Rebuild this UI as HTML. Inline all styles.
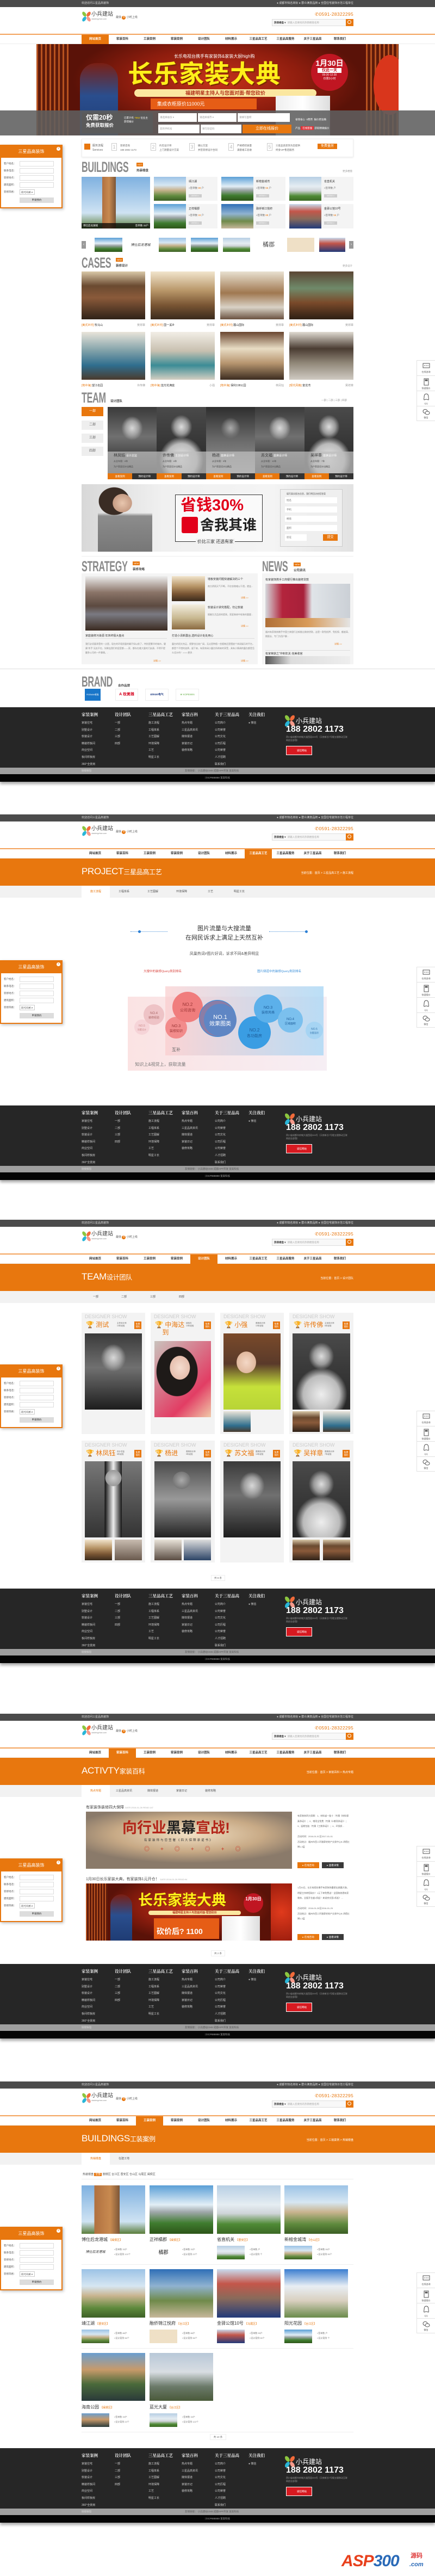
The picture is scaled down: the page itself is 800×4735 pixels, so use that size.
<!DOCTYPE html>
<html><head><meta charset="utf-8">
<style>
*{box-sizing:border-box}
body{margin:0;width:800px;height:4735px;position:relative;background:#fff;font-family:"Liberation Sans","Noto Sans CJK SC",sans-serif;overflow:hidden;color:#333}
.a{position:absolute}
.hd{position:absolute;left:0;width:800px;height:81px}
.tb{position:absolute;left:0;top:0;width:800px;height:13px;background:#4b4b4b;color:#ddd;font-size:5px;line-height:13px}
.tb .l{position:absolute;left:150px}.tb .r{position:absolute;right:150px}
.lg{position:absolute;left:150px;top:21px}
.lgt{position:absolute;left:168px;top:21px;font-size:10px;color:#444;line-height:11px}
.lgu{position:absolute;left:168px;top:33px;font-size:3.5px;color:#888}
.lgs{position:absolute;left:213px;top:28px;font-size:5px;color:#555}
.lgs b{display:inline-block;width:7px;height:7px;border-radius:50%;background:#e8770e;color:#fff;text-align:center;line-height:7px;font-size:5px;font-weight:normal}
.ph{position:absolute;right:150px;top:21px;font-size:8.5px;color:#e8770e;letter-spacing:.3px}
.sr{position:absolute;left:500px;top:35px;width:150px;height:13px;border:1px solid #ddd;background:#f8f8f8;font-size:4.5px;line-height:11px;color:#aaa}
.sr b{color:#333;margin:0 3px}.sr i{position:absolute;right:-1px;top:-1px;width:14px;height:13px;background:#e8770e}
.sr i:after{content:"";position:absolute;left:3px;top:2px;width:5px;height:5px;border:1.3px solid #fff;border-radius:50%}
.ln{position:absolute;left:0;top:62px;width:800px;height:2px;background:#f3a25b}
.nv{position:absolute;left:0;top:64px;width:800px;height:17px;background:#fff;border-bottom:1px solid #eee}
.nv span{position:absolute;top:0;width:50px;height:17px;text-align:center;font-size:5.5px;line-height:17px;font-weight:bold;color:#333}
.nv span.on{background:#e8770e;color:#fff}
.ib{position:absolute;left:0;top:81px;width:800px;height:50px;background:#e8770e;color:#fff}
.ib .t{position:absolute;left:150px;top:14px;font-size:17px;line-height:20px;letter-spacing:-.3px}
.ib .t small{font-size:12px}
.ib .bc{position:absolute;right:150px;top:23px;font-size:5px}
.sn{position:absolute;left:0;top:131px;width:800px;height:22px;background:#f2f2f2}
.sn span{position:absolute;top:0;width:52px;height:22px;text-align:center;font-size:5px;line-height:22px;color:#555}
.sn span.on{background:#fff;color:#e8770e}
.ft{position:absolute;left:0;width:800px;height:137px;box-shadow:0 4px 5px rgba(0,0,0,.35)}
.fd{position:absolute;left:0;top:0;width:800px;height:111px;background:#262626}
.fc{position:absolute;top:8px;font-size:5px;color:#ccc;line-height:12.6px}
.fc b{display:block;font-size:7.5px;color:#eee;font-family:"Liberation Serif","Noto Serif CJK SC",serif;margin-bottom:3px;line-height:12px}
.fg{position:absolute;left:0;top:111px;width:800px;height:12px;background:#9f9f9f;font-size:4.5px;line-height:12px;color:#555}
.fb{position:absolute;left:0;top:123px;width:800px;height:14px;background:#050505;font-size:4.5px;line-height:14px;color:#aaa;text-align:center}
.fl{position:absolute;left:0;width:115px;height:117px;border:2px solid #e8770e;background:#fff;box-shadow:2px 2px 5px rgba(0,0,0,.25)}
.fl .h{position:absolute;left:0;top:0;width:111px;height:22px;background:#e8770e;color:#fff;font-size:8px;line-height:22px;text-align:center}
.fl .x{position:absolute;right:2px;top:2px;width:7px;height:7px;border-radius:50%;background:#fff;color:#e8770e;font-size:5px;line-height:7px;text-align:center}
.fl .r{position:absolute;left:5px;font-size:4.5px;color:#555;line-height:10px;width:105px}
.fl .r i{position:absolute;left:29px;top:0;width:63px;height:10px;border:1px solid #ddd}
.fl .bt{position:absolute;left:34px;top:95px;width:63px;height:10px;background:#ddd;font-size:4.5px;line-height:10px;text-align:center;color:#333}
.tk{position:absolute;left:766px;width:34px;height:112px;background:#fff;border:1px solid #e2e2e2;border-right:none}
.tk div{height:28px;border-bottom:1px solid #e2e2e2;text-align:center;font-size:4px;color:#555;padding-top:4px;line-height:5px}
.tk svg{display:block;margin:0 auto 2px}
.ttl{position:absolute;font-size:27px;font-weight:bold;color:#8a8a8a;transform:scaleX(.6);transform-origin:0 0;line-height:22px;letter-spacing:-.5px}
.tag{position:absolute;background:#e8770e;color:#fff;font-size:4px;line-height:7px;padding:0 2px}
.sub{position:absolute;font-size:5.5px;color:#444;font-weight:bold}
.more{position:absolute;font-size:4.5px;color:#999}
.bld{background:linear-gradient(180deg,#9cc3e6 0%,#d6e6f2 35%,#c9b48f 55%,#5f8a3d 80%,#3c5f25 100%)}
.bld2{background:linear-gradient(180deg,#5a9fd6 0%,#e2eef6 40%,#9fa7a9 55%,#3f7c2f 78%,#2d5519 100%)}
.bld3{background:linear-gradient(180deg,#b7cfe4 0%,#e5edf2 40%,#cfd4d8 58%,#4f8a35 80%,#3c6a26 100%)}
.int{background:linear-gradient(180deg,#d9c8a8 0%,#6a4a30 30%,#8a5a3a 55%,#2f2218 100%)}
.int2{background:linear-gradient(180deg,#f1e4cc 0%,#b89668 40%,#7a5634 70%,#3a2a1c 100%)}
.int3{background:linear-gradient(180deg,#e9e4da 0%,#7fa0a8 40%,#2f6e8e 70%,#4b3a2c 100%)}
.bw{background:radial-gradient(ellipse 22% 18% at 50% 32%,#d8d8d8 0%,#a0a0a0 60%,transparent 100%),linear-gradient(180deg,#3a3a3a 0%,#707070 45%,#1d1d1d 100%)}
.bwl{background:radial-gradient(ellipse 22% 18% at 50% 30%,#ddd 0%,#999 60%,transparent 100%),radial-gradient(ellipse 45% 35% at 50% 80%,#eee 0%,#bbb 70%,transparent 100%),linear-gradient(180deg,#4a4a4a,#262626)}
.s5{font-size:5px;line-height:8px;color:#666}
.cap{position:absolute;font-size:5px;color:#333}
.cap em{color:#e8770e;font-style:normal}
.cap span{position:absolute;right:0;color:#999}
</style></head><body>

<!-- ================= PAGE 1 ================= -->
<div class="hd" style="top:0">
 <div class="tb"><span class="l">欢迎访问三星品高装饰</span><span class="r">● 成都市知名商标 ● 群众满意品牌 ● 全国住宅装饰示范工程单位</span></div>
 <svg class="lg" width="18" height="19" viewBox="0 0 18 19"><ellipse cx="5" cy="5" rx="3" ry="5" transform="rotate(-35 5 5)" fill="#8cc63f"/><ellipse cx="13" cy="5" rx="3" ry="5" transform="rotate(35 13 5)" fill="#f26b3a"/><ellipse cx="5" cy="14" rx="3" ry="5" transform="rotate(35 5 14)" fill="#29b6d8"/><ellipse cx="13" cy="14" rx="3" ry="5" transform="rotate(-35 13 14)" fill="#f59a8b"/></svg>
 <div class="lgt">小兵建站</div><div class="lgu">xiaobingzhan.com</div>
 <div class="lgs">最快 <b>8</b> 小时上线</div>
 <div class="ph">✆0591-28322295</div>
 <div class="sr"><b>热销楼盘 ▾</b>请输入您要找的热销楼盘名称<i></i></div>
 <div class="ln"></div>
 <div class="nv"><span class="on" style="left:150px">网站首页</span><span style="left:200px">家装百科</span><span style="left:250px">工装案例</span><span style="left:300px">家装案例</span><span style="left:350px">设计团队</span><span style="left:400px">材料展示</span><span style="left:450px">三星品高工艺</span><span style="left:500px">三星品高服务</span><span style="left:550px">关于三星品高</span><span style="left:600px">联系我们</span></div>
</div>

<!-- banner -->
<div class="a" style="left:67px;top:81px;width:666px;height:168px;background:radial-gradient(ellipse 40% 60% at 50% 40%,#c5321a 0%,#8e1d0e 60%,#5a1208 100%);overflow:hidden">
 <div class="a" style="left:0;top:0;width:60px;height:168px;background:repeating-linear-gradient(90deg,#b8521f 0 3px,#5e1a0a 3px 8px)"></div>
 <div class="a" style="left:606px;top:0;width:60px;height:168px;background:repeating-linear-gradient(90deg,#b8521f 0 3px,#5e1a0a 3px 8px)"></div>
 <div class="a" style="left:620px;top:20px;width:60px;height:110px;border-radius:50%;background:#d9361c"></div>
 <div class="a" style="left:80px;top:35px;width:70px;height:133px;background:linear-gradient(180deg,#7a1f14 0%,#2a4e8e 45%,#1f3c74 100%);border-radius:30px 30px 0 0"></div>
 <div class="a" style="left:253px;top:17px;font-size:8px;color:#fff">长乐电视台携手有家装饰&amp;家装大厨high购</div>
 <div class="a" style="left:168px;top:30px;font-size:46px;font-weight:bold;color:#ffef1a;letter-spacing:1px;line-height:50px;text-shadow:2px 2px 0 #7a2a00">长乐家装大典</div>
 <div class="a" style="left:505px;top:18px;width:68px;height:68px;border-radius:50%;background:#c01622;color:#fff;text-align:center;font-weight:bold;font-size:14px;padding-top:10px;line-height:15px">1月30日<div style="background:#fff;color:#c01622;font-size:7px;line-height:9px;margin:1px 12px">仅此一天</div><div style="font-size:5px;line-height:7px;font-weight:normal">09:30-12:30<br>仅限3小时</div></div>
 <div class="a" style="left:180px;top:83px;width:335px;height:14px;border-radius:7px;background:#fbe7a0;color:#b2321b;font-size:9px;font-weight:bold;text-align:center;line-height:14px">福建明星主持人与您面对面·帮您砍价</div>
 <div class="a" style="left:210px;top:100px;width:195px;height:20px;background:#e65d16;color:#fff;font-size:9px;line-height:20px;padding-left:12px">集成衣柜原价11000元</div>
 <div class="a" style="left:440px;top:95px;width:100px;height:73px;background:linear-gradient(90deg,#eee,#fff,#ddd)"></div>
</div>
<div class="a" style="left:0;top:203px;width:800px;height:46px;background:rgba(95,95,95,.88)"></div>
<div class="a" style="left:151px;top:207px;width:130px;height:38px;background:#5a5a5a"></div>
<div class="a" style="left:158px;top:210px;font-size:12px;color:#fff;font-weight:bold;line-height:13px">仅需20秒<br><span style="font-size:8.5px">免费获取报价</span></div>
<div class="a" style="left:228px;top:213px;font-size:4.5px;color:#fff;line-height:7px">已累计有 <span style="color:#ffd200">7552</span> 位业主<br>获得报价</div>
<div class="a" style="left:291px;top:208px;width:71px;height:16px;background:#fff;font-size:4.5px;color:#999;line-height:16px;padding-left:3px">请选择省份 ▾</div>
<div class="a" style="left:364px;top:208px;width:71px;height:16px;background:#fff;font-size:4.5px;color:#999;line-height:16px;padding-left:3px">请选择城市 ▾</div>
<div class="a" style="left:437px;top:208px;width:96px;height:16px;background:#fff;font-size:4.5px;color:#999;line-height:16px;padding-left:3px">请填写面积</div>
<div class="a" style="left:291px;top:229px;width:76px;height:16px;background:#fff;font-size:4.5px;color:#999;line-height:16px;padding-left:3px">您的手机号</div>
<div class="a" style="left:369px;top:229px;width:75px;height:16px;background:#fff;font-size:4.5px;color:#999;line-height:16px;padding-left:3px">填写验证码</div>
<div class="a" style="left:446px;top:229px;width:90px;height:16px;background:#e8770e;font-size:7px;color:#fff;line-height:16px;text-align:center">立即在线报价</div>
<div class="a" style="left:543px;top:212px;font-size:4.5px;color:#fff;line-height:16px">省钱省心 &nbsp;0费用 &nbsp;报价更准确<br>产品 <span style="background:#e2353a;padding:1px 3px">在线客服</span> 获取精确报价</div>

<!-- services -->
<div class="a" style="left:150px;top:255px;width:500px;height:34px;background:#fff;border:1px solid #eee;box-shadow:0 1px 3px rgba(0,0,0,.08)"></div>
<div class="a" style="left:155px;top:264px;width:11px;height:11px;background:#e8770e"></div>
<div class="a s5" style="left:170px;top:264px">服务流程<br>Services</div>
<div class="a" style="left:205px;top:263px;width:10px;height:14px;border:1px solid #ccc;font-size:9px;color:#bbb;text-align:center;line-height:12px">1</div><div class="a s5" style="left:221px;top:264px;font-size:4.5px">装修咨询<br>188 2802 1173</div>
<div class="a" style="left:277px;top:263px;width:10px;height:14px;border:1px solid #ccc;font-size:9px;color:#bbb;text-align:center;line-height:12px">2</div><div class="a s5" style="left:293px;top:264px;font-size:4.5px">约见设计师<br>上门测量设计方案</div>
<div class="a" style="left:348px;top:263px;width:10px;height:14px;border:1px solid #ccc;font-size:9px;color:#bbb;text-align:center;line-height:12px">3</div><div class="a s5" style="left:364px;top:264px;font-size:4.5px">确认方案<br>并签装修设计合同</div>
<div class="a" style="left:420px;top:263px;width:10px;height:14px;border:1px solid #ccc;font-size:9px;color:#bbb;text-align:center;line-height:12px">4</div><div class="a s5" style="left:436px;top:264px;font-size:4.5px">严格把控质量<br>满意竣工验收</div>
<div class="a" style="left:491px;top:263px;width:10px;height:14px;border:1px solid #ccc;font-size:9px;color:#bbb;text-align:center;line-height:12px">5</div><div class="a s5" style="left:507px;top:264px;font-size:4.5px">三星品高装饰为您提供<br>终身VIP售后服务</div>
<div class="a" style="left:584px;top:264px;width:36px;height:10px;background:#e8770e;color:#fff;font-size:6px;line-height:10px;text-align:center">免费量房</div>

<!-- BUILDINGS -->
<div class="ttl" style="left:150px;top:296px">BUILDINGS</div>
<div class="tag" style="left:251px;top:299px">HOT</div><div class="sub" style="left:251px;top:309px">热装楼盘</div>
<div class="more" style="left:630px;top:312px">更多楼盘</div>
<div class="a bld" style="left:150px;top:325px;width:126px;height:95px;background:linear-gradient(90deg,transparent 30%,#b07040 30%,#c88a50 40%,#7c5637 50%,transparent 50%),linear-gradient(180deg,#7fb1e0,#cfe3f3 70%,#5a7d3a)"></div>
<div class="a" style="left:150px;top:410px;width:126px;height:10px;background:rgba(0,0,0,.7);color:#fff;font-size:4.5px;line-height:10px;padding:0 3px">博仕后龙湖城<span style="float:right">签单数 33户</span></div>

<div class="a" style="left:283px;top:325px;width:117px;height:44px;background:#f4f4f4"><div class="a bld" style="left:0;top:0;width:59px;height:44px"></div><div class="a s5" style="left:64px;top:5px;color:#333">靖江湖</div><div class="a s5" style="left:64px;top:17px;font-size:4.5px">»签单数 <em style="color:#e8770e;font-style:normal">88</em> 户</div><div class="a" style="left:64px;top:32px;width:24px;height:6px;background:#ccc;color:#fff;font-size:4px;line-height:6px;text-align:center">VIEW>></div></div>
<div class="a" style="left:407px;top:325px;width:118px;height:44px;background:#f4f4f4"><div class="a bld2" style="left:0;top:0;width:59px;height:44px"></div><div class="a s5" style="left:64px;top:5px;color:#333">新榕金城湾</div><div class="a s5" style="left:64px;top:17px;font-size:4.5px">»签单数 <em style="color:#e8770e;font-style:normal">55</em> 户</div><div class="a" style="left:64px;top:32px;width:24px;height:6px;background:#ccc;color:#fff;font-size:4px;line-height:6px;text-align:center">VIEW>></div></div>
<div class="a" style="left:532px;top:325px;width:118px;height:44px;background:#f4f4f4"><div class="a bld3" style="left:0;top:0;width:59px;height:44px"></div><div class="a s5" style="left:64px;top:5px;color:#333">省直机关</div><div class="a s5" style="left:64px;top:17px;font-size:4.5px">»签单数 户</div><div class="a" style="left:64px;top:32px;width:24px;height:6px;background:#ccc;color:#fff;font-size:4px;line-height:6px;text-align:center">VIEW>></div></div>
<div class="a" style="left:283px;top:375px;width:117px;height:45px;background:#f4f4f4"><div class="a bld2" style="left:0;top:0;width:59px;height:45px"></div><div class="a s5" style="left:64px;top:5px;color:#333">正祥橘郡</div><div class="a s5" style="left:64px;top:17px;font-size:4.5px">»签单数 <em style="color:#e8770e;font-style:normal">33</em> 户</div><div class="a" style="left:64px;top:32px;width:24px;height:6px;background:#ccc;color:#fff;font-size:4px;line-height:6px;text-align:center">VIEW>></div></div>
<div class="a" style="left:407px;top:375px;width:118px;height:45px;background:#f4f4f4"><div class="a bld" style="left:0;top:0;width:59px;height:45px;background:linear-gradient(180deg,#2f6fb7,#8fb2d0 40%,#6f8a4a 70%,#c7b79b)"></div><div class="a s5" style="left:64px;top:5px;color:#333">融侨锦江悦府</div><div class="a s5" style="left:64px;top:17px;font-size:4.5px">»签单数 <em style="color:#e8770e;font-style:normal">88</em> 户</div><div class="a" style="left:64px;top:32px;width:24px;height:6px;background:#ccc;color:#fff;font-size:4px;line-height:6px;text-align:center">VIEW>></div></div>
<div class="a" style="left:532px;top:375px;width:118px;height:45px;background:#f4f4f4"><div class="a" style="left:0;top:0;width:59px;height:45px;background:linear-gradient(180deg,#c9dcef,#c4564a 30%,#8a6a5a 60%,#223a7a)"></div><div class="a s5" style="left:64px;top:5px;color:#333">金驿公馆10号</div><div class="a s5" style="left:64px;top:17px;font-size:4.5px">»签单数 <em style="color:#e8770e;font-style:normal">55</em> 户</div><div class="a" style="left:64px;top:32px;width:24px;height:6px;background:#ccc;color:#fff;font-size:4px;line-height:6px;text-align:center">VIEW>></div></div>

<!-- logo carousel -->
<div class="a" style="left:150px;top:443px;width:8px;height:14px;background:#999;color:#fff;font-size:7px;line-height:14px;text-align:center">‹</div>
<div class="a" style="left:642px;top:443px;width:8px;height:14px;background:#999;color:#fff;font-size:7px;line-height:14px;text-align:center">›</div>
<div class="a bld2" style="left:174px;top:437px;width:51px;height:26px"></div>
<div class="a" style="left:233px;top:437px;width:51px;height:26px;background:#fff;font-size:6px;color:#333;text-align:center;padding-top:8px;font-style:italic">博仕后龙港城</div>
<div class="a bld" style="left:292px;top:437px;width:50px;height:26px"></div>
<div class="a bld2" style="left:351px;top:437px;width:50px;height:26px"></div>
<div class="a bld3" style="left:410px;top:437px;width:50px;height:26px"></div>
<div class="a" style="left:469px;top:437px;width:50px;height:26px;background:#fff;font-size:11px;color:#222;text-align:center;line-height:24px;font-family:'Noto Serif CJK SC',serif">橘郡</div>
<div class="a" style="left:528px;top:437px;width:50px;height:26px;background:#efe0c6"></div>
<div class="a" style="left:587px;top:437px;width:48px;height:26px;background:linear-gradient(180deg,#c9dcef,#c4564a 40%,#223a7a)"></div>

<!-- CASES -->
<div class="ttl" style="left:150px;top:472px">CASES</div>
<div class="tag" style="left:213px;top:474px">NEW</div><div class="sub" style="left:213px;top:484px">装修设计</div>
<div class="more" style="left:630px;top:486px">更多设计</div>
<div class="a int" style="left:150px;top:499px;width:117px;height:88px"></div>
<div class="a int2" style="left:277px;top:499px;width:118px;height:88px"></div>
<div class="a int2" style="left:405px;top:499px;width:117px;height:88px;background:linear-gradient(180deg,#e8e0d0,#a07850 45%,#d9d2c6 75%,#6a5240)"></div>
<div class="a int" style="left:532px;top:499px;width:118px;height:88px;background:linear-gradient(180deg,#5b4634,#6f8a6a 35%,#7a4a2a 65%,#2d1f14)"></div>
<div class="cap" style="left:150px;top:594px;width:117px"><em>[美式乡村]</em> 牧马山<span>吴祥章</span></div>
<div class="cap" style="left:277px;top:594px;width:118px"><em>[美式乡村]</em> 国一溪乡<span>吴祥章</span></div>
<div class="cap" style="left:405px;top:594px;width:117px"><em>[美式乡村]</em> 麓山国际<span>吴祥章</span></div>
<div class="cap" style="left:532px;top:594px;width:118px"><em>[美式乡村]</em> 麓山国际<span>吴祥章</span></div>
<div class="a int3" style="left:150px;top:610px;width:117px;height:88px"></div>
<div class="a int3" style="left:277px;top:610px;width:118px;height:88px;background:linear-gradient(180deg,#f2eee6,#c8c0b0 40%,#3b8c96 70%,#d5cfc2)"></div>
<div class="a int2" style="left:405px;top:610px;width:117px;height:88px;background:linear-gradient(180deg,#6a4630,#e8dcc4 35%,#b89670 65%,#3c2c20)"></div>
<div class="a" style="left:532px;top:610px;width:118px;height:88px;background:linear-gradient(180deg,#e0dbd2,#4a3c32 35%,#908778 65%,#cfcac2)"></div>
<div class="cap" style="left:150px;top:705px;width:117px"><em>[地中海]</em> 望江名园<span>许传佛</span></div>
<div class="cap" style="left:277px;top:705px;width:118px"><em>[地中海]</em> 蓝光花满庭<span>小强</span></div>
<div class="cap" style="left:405px;top:705px;width:117px"><em>[地中海]</em> 保利198公园<span>林凤钰</span></div>
<div class="cap" style="left:532px;top:705px;width:118px"><em>[现代风格]</em> 富龙湾<span>吴祥章</span></div>

<!-- TEAM -->
<div class="ttl" style="left:150px;top:720px">TEAM</div>
<div class="sub" style="left:203px;top:733px">设计团队</div>
<div class="more" style="left:591px;top:733px">一部 | 二部 | 三部 | 四部</div>
<div class="a" style="left:150px;top:748px;width:40px;height:17px;background:#e8770e;color:#fff;font-size:6px;line-height:17px;text-align:center">一部</div>
<div class="a" style="left:150px;top:773px;width:40px;height:17px;background:#eee;color:#666;font-size:6px;line-height:17px;text-align:center">二部</div>
<div class="a" style="left:150px;top:797px;width:40px;height:17px;background:#eee;color:#666;font-size:6px;line-height:17px;text-align:center">三部</div>
<div class="a" style="left:150px;top:821px;width:40px;height:17px;background:#eee;color:#666;font-size:6px;line-height:17px;text-align:center">四部</div>
<div class="a" style="left:198px;top:748px;width:452px;height:133px;background:#333"></div>
<div class="a bw" style="left:198px;top:748px;width:90px;height:122px"></div>
<div class="a bwl" style="left:288px;top:748px;width:91px;height:122px"></div>
<div class="a bw" style="left:379px;top:748px;width:90px;height:122px;background:radial-gradient(ellipse 20% 16% at 50% 32%,#aaa,#777 60%,transparent),linear-gradient(180deg,#2d2d2d,#6a6a6a 50%,#999)"></div>
<div class="a bw" style="left:469px;top:748px;width:91px;height:122px"></div>
<div class="a bwl" style="left:560px;top:748px;width:90px;height:122px"></div>
<div class="a" style="left:198px;top:830px;width:452px;height:40px;background:rgba(190,190,190,.75)"></div>
<div class="a s5" style="left:209px;top:833px;color:#333;font-size:7px;line-height:10px">林凤钰 <span style="font-size:5px;color:#fff">设计总监</span><br><span style="font-size:4px;color:#444;line-height:6px">从业年限：8年<br>为户家居设计出精品</span></div>
<div class="a s5" style="left:299px;top:833px;color:#333;font-size:7px;line-height:10px">许传佛 <span style="font-size:5px;color:#fff">主创设计师</span><br><span style="font-size:4px;color:#444;line-height:6px">从业年限：6年<br>为户家居设计出精品</span></div>
<div class="a s5" style="left:390px;top:833px;color:#333;font-size:7px;line-height:10px">杨进 <span style="font-size:5px;color:#fff">首席设计师</span><br><span style="font-size:4px;color:#444;line-height:6px">从业年限：9年<br>为户家居设计出精品</span></div>
<div class="a s5" style="left:480px;top:833px;color:#333;font-size:7px;line-height:10px">苏文福 <span style="font-size:5px;color:#fff">首席设计师</span><br><span style="font-size:4px;color:#444;line-height:6px">从业年限：10年<br>为户家居设计出精品</span></div>
<div class="a s5" style="left:571px;top:833px;color:#333;font-size:7px;line-height:10px">吴祥章 <span style="font-size:5px;color:#fff">首席设计师</span><br><span style="font-size:4px;color:#444;line-height:6px">从业年限：7年<br>为户家居设计出精品</span></div>
<div class="a" style="left:198px;top:870px;width:452px;height:11px;font-size:4.5px;line-height:11px;color:#fff;text-align:center;display:flex">
<span style="flex:1;background:#e8770e">查看案例</span><span style="flex:1;background:#333">预约设计师</span><span style="flex:1;background:#e8770e">查看案例</span><span style="flex:1;background:#333">预约设计师</span><span style="flex:1;background:#e8770e">查看案例</span><span style="flex:1;background:#333">预约设计师</span><span style="flex:1;background:#e8770e">查看案例</span><span style="flex:1;background:#333">预约设计师</span><span style="flex:1;background:#e8770e">查看案例</span><span style="flex:1;background:#333">预约设计师</span></div>

<!-- Ad -->
<div class="a" style="left:150px;top:890px;width:500px;height:124px;background:linear-gradient(90deg,#d8d8d8,#f0f0f0 30%,#f4f4f4 70%,#e2e2e2)"></div>
<div class="a" style="left:180px;top:895px;width:100px;height:119px;background:radial-gradient(ellipse 25% 20% at 45% 25%,#e8c6ae,#c69c84 70%,transparent 72%),radial-gradient(ellipse 40% 30% at 30% 22%,#3a2c24,#3a2c24 70%,transparent 72%),linear-gradient(180deg,transparent 40%,#8c8c8c 45%,#777)"></div>
<div class="a" style="left:322px;top:909px;width:161px;height:87px;border:1px solid #333;background:rgba(255,255,255,.6)"></div>
<div class="a" style="left:332px;top:913px;font-size:29px;font-weight:bold;color:#e2001a;line-height:32px">省钱30%</div>
<div class="a" style="left:334px;top:950px;width:30px;height:30px;background:#e2001a;border-radius:3px"></div>
<div class="a" style="left:368px;top:950px;font-size:26px;font-weight:bold;color:#222;line-height:30px">舍我其谁</div>
<div class="a" style="left:360px;top:990px;font-size:8px;color:#333;background:#f2f2f2;padding:0 3px">价比三家 还选有家</div>
<div class="a" style="left:515px;top:899px;width:115px;height:106px;border:1px solid #ccc;background:rgba(240,240,240,.9)"></div>
<div class="a" style="left:527px;top:905px;font-size:4px;color:#555">填写真实报名信息，我们将回访给您答案</div>
<div class="a" style="left:524px;top:914px;width:96px;height:11px;background:#fff;font-size:4.5px;color:#777;line-height:11px;padding-left:3px">姓名</div>
<div class="a" style="left:524px;top:931px;width:96px;height:11px;background:#fff;font-size:4.5px;color:#777;line-height:11px;padding-left:3px">手机</div>
<div class="a" style="left:524px;top:948px;width:96px;height:11px;background:#fff;font-size:4.5px;color:#777;line-height:11px;padding-left:3px">楼盘</div>
<div class="a" style="left:524px;top:965px;width:96px;height:11px;background:#fff;font-size:4.5px;color:#777;line-height:11px;padding-left:3px">面积</div>
<div class="a" style="left:524px;top:982px;width:40px;height:12px;background:#fff;font-size:4.5px;color:#777;line-height:12px;padding-left:3px">验证</div>
<div class="a" style="left:594px;top:982px;width:27px;height:12px;background:#e8770e;font-size:6px;color:#fff;line-height:12px;text-align:center">提交</div>
<div class="a" style="left:150px;top:1022px;width:500px;height:1px;background:#eee"></div>

<!-- STRATEGY / NEWS -->
<div class="ttl" style="left:150px;top:1030px">STRATEGY</div>
<div class="tag" style="left:244px;top:1032px">NEW</div><div class="sub" style="left:244px;top:1042px">装修攻略</div>
<div class="ttl" style="left:482px;top:1030px">NEWS</div>
<div class="tag" style="left:540px;top:1034px">NEW</div><div class="sub" style="left:540px;top:1044px">公司资讯</div>
<div class="a" style="left:150px;top:1054px;width:324px;height:167px;background:#f4f4f4"></div>
<div class="a" style="left:157px;top:1059px;width:151px;height:100px;background:linear-gradient(180deg,#ececec 0%,#8a7468 30%,#5c4a40 55%,#7a7a82 70%,#3b2a20 100%)"></div>
<div class="a int2" style="left:316px;top:1059px;width:61px;height:46px"></div>
<div class="a int2" style="left:316px;top:1111px;width:61px;height:46px;background:linear-gradient(180deg,#f3eee0,#c8b890 55%,#8a6a40)"></div>
<div class="a s5" style="left:382px;top:1061px;color:#333;font-size:5px">墙板安装问题快速解决的三个</div>
<div class="a" style="left:382px;top:1074px;width:88px;font-size:4px;color:#888;line-height:7px">南方阴雨天气不断，不仅衣物难以干透，就连...</div>
<div class="a" style="left:443px;top:1096px;font-size:4px;color:#e8770e">详情 &gt;&gt;</div>
<div class="a s5" style="left:382px;top:1113px;color:#333;font-size:5px">软装设计讲究搭配，勿让软装</div>
<div class="a" style="left:382px;top:1126px;width:88px;font-size:4px;color:#888;line-height:7px">随着生活品质的提高，家庭装修中软装的重要...</div>
<div class="a" style="left:443px;top:1148px;font-size:4px;color:#e8770e">详情 &gt;&gt;</div>
<div class="a s5" style="left:157px;top:1165px;color:#333;font-size:5px;width:150px;border-bottom:1px solid #ddd">家庭装修污染源 年末终极大盘点</div>
<div class="a" style="left:157px;top:1180px;width:150px;font-size:4px;color:#888;line-height:8px">我们必须要承受的一点是，现在的环境质量的确不如以前了，特别是繁华的城市，健康"杀手"无处不在，如果连我们的居室都——家，都存在着大量的污染源，不得不提醒多公司的一件事情。..</div>
<div class="a" style="left:282px;top:1212px;font-size:4px;color:#e8770e">详情 &gt;&gt;</div>
<div class="a s5" style="left:316px;top:1165px;color:#333;font-size:5px;width:152px;border-bottom:1px solid #ddd">打造小清新露台,选料设计处处用心</div>
<div class="a" style="left:316px;top:1180px;width:152px;font-size:4px;color:#888;line-height:8px">露台的阳光充足，视野也比较广阔，无论是种植一些植物还是摆放个休闲娱乐的平台，都是个不错的选择，留下来，有家休闲小露台所带来的享受，具有小情调的露台都是怎么设计的！&gt;&gt;&gt;&gt;更多..</div>
<div class="a" style="left:443px;top:1212px;font-size:4px;color:#e8770e">详情 &gt;&gt;</div>
<div class="a" style="left:482px;top:1054px;width:168px;height:167px;background:#f4f4f4"></div>
<div class="a s5" style="left:488px;top:1062px;color:#333;font-size:5px">有家装饰携手工商银行推出装修贷款</div>
<div class="a" style="left:488px;top:1073px;width:156px;height:80px;background:linear-gradient(90deg,#d4d8dc,#b3243c 20%,#a8203a 45%,#e0e4e8 55%,#cbd0d6),linear-gradient(#ccc,#c48a4a)"></div>
<div class="a" style="left:488px;top:1136px;width:156px;height:17px;background:linear-gradient(90deg,#b07038,#d89a58,#e4e4e4)"></div>
<div class="a" style="left:488px;top:1158px;width:156px;font-size:4px;color:#888;line-height:8px">福州有家装饰携手中国工商银行全新推出装修贷款，这是一款免抵押、免担保、额度高、期限长、专门为用户解...</div>
<div class="a" style="left:615px;top:1181px;font-size:4px;color:#e8770e">详情 &gt;&gt;</div>
<div class="a s5" style="left:488px;top:1195px;color:#333;font-size:5px;width:156px;border-top:1px solid #ddd;padding-top:2px">有家荣获之"冲刺年关·完美收官</div>
<div class="a" style="left:488px;top:1206px;width:156px;height:15px;background:linear-gradient(90deg,#555,#ddd 30%,#eee)"></div>

<div class="a" style="left:0;top:1229px;width:800px;height:1px;background:#ddd"></div>
<div class="ttl" style="left:150px;top:1242px">BRAND</div>
<div class="sub" style="left:217px;top:1256px">合作品牌</div>
<div class="a" style="left:156px;top:1266px;width:29px;height:22px;background:#1976c9;color:#fff;font-size:4px;text-align:center;line-height:22px">ROBAM老板</div>
<div class="a" style="left:212px;top:1266px;width:42px;height:22px;background:#fff;border:1px solid #eee;color:#d6001c;font-size:7px;text-align:center;line-height:20px;font-weight:bold">A 玫美雅</div>
<div class="a" style="left:267px;top:1266px;width:43px;height:22px;background:#fff;border:1px solid #eee;color:#1d3a80;font-size:5px;text-align:center;line-height:20px;font-weight:bold">simon电气</div>
<div class="a" style="left:323px;top:1266px;width:43px;height:22px;background:#fff;border:1px solid #eee;color:#6ab04c;font-size:4.5px;text-align:center;line-height:20px">❦ KOPEWIN</div>

<!-- FOOTER template p1 -->
<div class="ft" style="top:1300px">
 <div class="fd"></div>
 <div class="fc" style="left:150px"><b>家装案例</b>家装住宅<br>别墅设计<br>软装设计<br>精装样板间<br>商业空间<br>板间样板房<br>360°全景房</div>
 <div class="fc" style="left:211px"><b>设计团队</b>一部<br>二部<br>三部<br>四部</div>
 <div class="fc" style="left:273px"><b>三星品高工艺</b>施工流程<br>工程体系<br>工艺图解<br>环境保障<br>工艺<br>明星工长</div>
 <div class="fc" style="left:334px"><b>家装百科</b>热点专题<br>三星品高资讯<br>媒体报道<br>家装日记<br>装修攻略</div>
 <div class="fc" style="left:395px"><b>关于三星品高</b>公司简介<br>公司荣誉<br>公司文化<br>公司历程<br>公司荣誉<br>人才招聘<br>联系我们</div>
 <div class="fc" style="left:457px"><b>关注我们</b>● 微信</div>
 <svg class="a" style="left:522px;top:14px" width="22" height="22" viewBox="0 0 18 19"><ellipse cx="5" cy="5" rx="3" ry="5" transform="rotate(-35 5 5)" fill="#8cc63f"/><ellipse cx="13" cy="5" rx="3" ry="5" transform="rotate(35 13 5)" fill="#f26b3a"/><ellipse cx="5" cy="14" rx="3" ry="5" transform="rotate(35 5 14)" fill="#29b6d8"/><ellipse cx="13" cy="14" rx="3" ry="5" transform="rotate(-35 13 14)" fill="#f59a8b"/></svg>
 <div class="a" style="left:544px;top:16px;font-size:12px;color:#fff">小兵建站</div>
 <div class="a" style="left:526px;top:32px;font-size:16px;font-weight:bold;color:#fff;line-height:18px">188 2802 1173</div>
 <div class="a" style="left:526px;top:52px;width:115px;font-size:4px;color:#999;line-height:6px">四川省成都市府城大道西段399号（天府新谷7号楼五楼移动互联网创业部落）</div>
 <div class="a" style="left:526px;top:71px;width:48px;height:17px;background:#d71920;border:1px solid #fff;color:#fff;font-size:4.5px;line-height:15px;padding-left:19px">诚信网站</div>
 <div class="fg"><span style="position:absolute;left:150px;color:#ddd">链接按钮</span><span style="position:absolute;left:340px">友情链接： 小兵建站CMS 成都APP开发 宽高科技</span></div>
 <div class="fb">川ICP888888 宽高科技</div>
</div>

<!-- float + toolbar p1 -->
<div class="fl" style="top:266px"><div class="h">三星品高装饰</div><div class="x">x</div>
<div class="r" style="top:28px">客户姓名：<i></i></div><div class="r" style="top:41px">联系电话：<i></i></div><div class="r" style="top:54px">装修地点：<i></i></div><div class="r" style="top:67px">建筑面积：<i></i></div><div class="r" style="top:80px">装修风格：<i style="width:28px;border-color:#ccc">&nbsp;现代风格 ▾</i></div><div class="bt">申请预约</div></div>
<div class="tk" style="top:662px"><div><svg width="14" height="12"><rect x="1" y="1" width="12" height="8" fill="none" stroke="#555"/><circle cx="4" cy="5" r=".8" fill="#555"/><circle cx="7" cy="5" r=".8" fill="#555"/><circle cx="10" cy="5" r=".8" fill="#555"/></svg>在线咨询</div><div><svg width="10" height="14"><rect x="1" y="1" width="8" height="12" fill="none" stroke="#555"/><rect x="2.5" y="2.5" width="5" height="3" fill="#555"/></svg>快速报价</div><div><svg width="12" height="14"><path d="M6 1C3 1 2 4 2 7c0 2-1 4 0 5 1 0 2-1 4-1s3 1 4 1c1-1 0-3 0-5 0-3-1-6-4-6z" fill="none" stroke="#555"/></svg>QQ</div><div style="border:none"><svg width="14" height="12"><ellipse cx="5" cy="5" rx="4" ry="3.5" fill="none" stroke="#555"/><ellipse cx="9" cy="8" rx="4" ry="3" fill="#fff" stroke="#555"/></svg>微信</div></div>

<!-- ================= PAGE 2 ================= -->
<div class="hd" style="top:1497px">
 <div class="tb"><span class="l">欢迎访问三星品高装饰</span><span class="r">● 成都市知名商标 ● 群众满意品牌 ● 全国住宅装饰示范工程单位</span></div>
 <svg class="lg" width="18" height="19" viewBox="0 0 18 19"><ellipse cx="5" cy="5" rx="3" ry="5" transform="rotate(-35 5 5)" fill="#8cc63f"/><ellipse cx="13" cy="5" rx="3" ry="5" transform="rotate(35 13 5)" fill="#f26b3a"/><ellipse cx="5" cy="14" rx="3" ry="5" transform="rotate(35 5 14)" fill="#29b6d8"/><ellipse cx="13" cy="14" rx="3" ry="5" transform="rotate(-35 13 14)" fill="#f59a8b"/></svg>
 <div class="lgt">小兵建站</div><div class="lgu">xiaobingzhan.com</div><div class="lgs">最快 <b>8</b> 小时上线</div>
 <div class="ph">✆0591-28322295</div><div class="sr"><b>热销楼盘 ▾</b>请输入您要找的热销楼盘名称<i></i></div><div class="ln"></div>
 <div class="nv"><span style="left:150px">网站首页</span><span style="left:200px">家装百科</span><span style="left:250px">工装案例</span><span style="left:300px">家装案例</span><span style="left:350px">设计团队</span><span style="left:400px">材料展示</span><span class="on" style="left:450px">三星品高工艺</span><span style="left:500px">三星品高服务</span><span style="left:550px">关于三星品高</span><span style="left:600px">联系我们</span></div>
 <div class="ib"><div class="t">PROJECT<small>三星品高工艺</small></div><div class="bc">当前位置：首页 &gt; 三星品高工艺 &gt; 施工流程</div></div>
 <div class="sn"><span class="on" style="left:150px">施工流程</span><span style="left:202px">工程体系</span><span style="left:255px">工艺图解</span><span style="left:308px">环境保障</span><span style="left:361px">工艺</span><span style="left:414px">明星工长</span></div>
</div>
<div class="a" style="left:250px;top:1699px;width:325px;text-align:center;font-size:11px;color:#333;line-height:17px">图片流量与大搜流量<br>在网民诉求上满足上天然互补</div>
<div class="a" style="left:240px;top:1712px;width:68px;border-top:1px dotted #4a90d9"></div><div class="a" style="left:254px;top:1710px;width:5px;height:5px;border-radius:50%;background:#2b7fd4"></div>
<div class="a" style="left:495px;top:1712px;width:68px;border-top:1px dotted #4a90d9"></div><div class="a" style="left:561px;top:1710px;width:5px;height:5px;border-radius:50%;background:#2b7fd4"></div>
<div class="a" style="left:250px;top:1748px;width:325px;text-align:center;font-size:7px;color:#555">凤巢热词≠图片好词，诉求不同&amp;差异明显</div>
<div class="a" style="left:264px;top:1781px;font-size:5.5px;color:#d9453f">大搜中的装修Query类别排名</div>
<div class="a" style="left:473px;top:1781px;font-size:5.5px;color:#3a8fd9">图片频道中的装修Query类别排名</div>
<div class="a" style="left:235px;top:1832px;width:366px;height:136px;background:linear-gradient(90deg,#fbe3e3,#f6eef4)"></div>
<div class="a" style="left:304px;top:1813px;width:291px;height:127px;background:linear-gradient(90deg,rgba(250,205,205,.7),rgba(170,215,245,.8))"></div>
<svg class="a" style="left:235px;top:1812px" width="366" height="156">
<g font-family="Liberation Sans,Noto Sans CJK SC,sans-serif" text-anchor="middle" fill="#fff">
<circle cx="26" cy="76" r="14" fill="#f6d4d8"/><text x="26" y="75" font-size="5" fill="#c88">NO.5</text><text x="26" y="82" font-size="4" fill="#c88">别墅设计</text>
<circle cx="48" cy="53" r="19" fill="#eec3c6"/><text x="48" y="52" font-size="6" fill="#a66">NO.4</text><text x="48" y="60" font-size="5" fill="#a66">装修经验</text>
<circle cx="89" cy="77" r="20" fill="#f28b8b"/><text x="89" y="76" font-size="7" fill="#933">NO.3</text><text x="89" y="85" font-size="6" fill="#933">装修知识</text>
<circle cx="110" cy="39" r="28" fill="#f07d7d"/><text x="110" y="37" font-size="8" fill="#933">NO.2</text><text x="110" y="47" font-size="7" fill="#933">公司咨询</text>
<circle cx="165" cy="60" r="34" fill="#2e8ee0"/><circle cx="165" cy="60" r="33" fill="#e76b6b" opacity=".5"/><circle cx="170" cy="63" r="30" fill="#5f86c4"/><text x="170" y="61" font-size="11">NO.1</text><text x="170" y="73" font-size="10">效果图类</text>
<circle cx="233" cy="86" r="30" fill="#3a9de3"/><text x="233" y="84" font-size="8" fill="#1d5c99">NO.2</text><text x="233" y="94" font-size="7" fill="#1d5c99">各功能房</text>
<circle cx="258" cy="42" r="26" fill="#5cb0ea"/><text x="258" y="42" font-size="7" fill="#1d5c99">NO.3</text><text x="258" y="51" font-size="6" fill="#1d5c99">装修风格</text>
<circle cx="299" cy="63" r="23" fill="#7bc0ee"/><text x="299" y="63" font-size="6" fill="#1d5c99">NO.4</text><text x="299" y="71" font-size="5" fill="#1d5c99">区域面积</text>
<circle cx="343" cy="82" r="16" fill="#a6d4f3"/><text x="343" y="81" font-size="5" fill="#3577b0">NO.5</text><text x="343" y="88" font-size="4" fill="#3577b0">别墅面积</text>
<text x="89" y="120" font-size="8" fill="#666">互补</text>
<text x="60" y="147" font-size="8" fill="#777">知识上&amp;视觉上，获取流量</text></g></svg>

<div class="ft" style="top:2032px">
 <div class="fd"></div>
 <div class="fc" style="left:150px"><b>家装案例</b>家装住宅<br>别墅设计<br>软装设计<br>精装样板间<br>商业空间<br>板间样板房<br>360°全景房</div>
 <div class="fc" style="left:211px"><b>设计团队</b>一部<br>二部<br>三部<br>四部</div>
 <div class="fc" style="left:273px"><b>三星品高工艺</b>施工流程<br>工程体系<br>工艺图解<br>环境保障<br>工艺<br>明星工长</div>
 <div class="fc" style="left:334px"><b>家装百科</b>热点专题<br>三星品高资讯<br>媒体报道<br>家装日记<br>装修攻略</div>
 <div class="fc" style="left:395px"><b>关于三星品高</b>公司简介<br>公司荣誉<br>公司文化<br>公司历程<br>公司荣誉<br>人才招聘<br>联系我们</div>
 <div class="fc" style="left:457px"><b>关注我们</b>● 微信</div>
 <svg class="a" style="left:522px;top:14px" width="22" height="22" viewBox="0 0 18 19"><ellipse cx="5" cy="5" rx="3" ry="5" transform="rotate(-35 5 5)" fill="#8cc63f"/><ellipse cx="13" cy="5" rx="3" ry="5" transform="rotate(35 13 5)" fill="#f26b3a"/><ellipse cx="5" cy="14" rx="3" ry="5" transform="rotate(35 5 14)" fill="#29b6d8"/><ellipse cx="13" cy="14" rx="3" ry="5" transform="rotate(-35 13 14)" fill="#f59a8b"/></svg>
 <div class="a" style="left:544px;top:16px;font-size:12px;color:#fff">小兵建站</div>
 <div class="a" style="left:526px;top:32px;font-size:16px;font-weight:bold;color:#fff;line-height:18px">188 2802 1173</div>
 <div class="a" style="left:526px;top:52px;width:115px;font-size:4px;color:#999;line-height:6px">四川省成都市府城大道西段399号（天府新谷7号楼五楼移动互联网创业部落）</div>
 <div class="a" style="left:526px;top:71px;width:48px;height:17px;background:#d71920;border:1px solid #fff;color:#fff;font-size:4.5px;line-height:15px;padding-left:19px">诚信网站</div>
 <div class="fg"><span style="position:absolute;left:150px;color:#ddd">链接按钮</span><span style="position:absolute;left:340px">友情链接： 小兵建站CMS 成都APP开发 宽高科技</span></div>
 <div class="fb">川ICP888888 宽高科技</div>
</div>
<div class="fl" style="top:1765px"><div class="h">三星品高装饰</div><div class="x">x</div>
<div class="r" style="top:28px">客户姓名：<i></i></div><div class="r" style="top:41px">联系电话：<i></i></div><div class="r" style="top:54px">装修地点：<i></i></div><div class="r" style="top:67px">建筑面积：<i></i></div><div class="r" style="top:80px">装修风格：<i style="width:28px;border-color:#ccc">&nbsp;现代风格 ▾</i></div><div class="bt">申请预约</div></div>
<div class="tk" style="top:1777px"><div><svg width="14" height="12"><rect x="1" y="1" width="12" height="8" fill="none" stroke="#555"/><circle cx="4" cy="5" r=".8" fill="#555"/><circle cx="7" cy="5" r=".8" fill="#555"/><circle cx="10" cy="5" r=".8" fill="#555"/></svg>在线咨询</div><div><svg width="10" height="14"><rect x="1" y="1" width="8" height="12" fill="none" stroke="#555"/><rect x="2.5" y="2.5" width="5" height="3" fill="#555"/></svg>快速报价</div><div><svg width="12" height="14"><path d="M6 1C3 1 2 4 2 7c0 2-1 4 0 5 1 0 2-1 4-1s3 1 4 1c1-1 0-3 0-5 0-3-1-6-4-6z" fill="none" stroke="#555"/></svg>QQ</div><div style="border:none"><svg width="14" height="12"><ellipse cx="5" cy="5" rx="4" ry="3.5" fill="none" stroke="#555"/><ellipse cx="9" cy="8" rx="4" ry="3" fill="#fff" stroke="#555"/></svg>微信</div></div>

<!-- ================= PAGE 3 ================= -->
<div class="hd" style="top:2242px">
 <div class="tb"><span class="l">欢迎访问三星品高装饰</span><span class="r">● 成都市知名商标 ● 群众满意品牌 ● 全国住宅装饰示范工程单位</span></div>
 <svg class="lg" width="18" height="19" viewBox="0 0 18 19"><ellipse cx="5" cy="5" rx="3" ry="5" transform="rotate(-35 5 5)" fill="#8cc63f"/><ellipse cx="13" cy="5" rx="3" ry="5" transform="rotate(35 13 5)" fill="#f26b3a"/><ellipse cx="5" cy="14" rx="3" ry="5" transform="rotate(35 5 14)" fill="#29b6d8"/><ellipse cx="13" cy="14" rx="3" ry="5" transform="rotate(-35 13 14)" fill="#f59a8b"/></svg>
 <div class="lgt">小兵建站</div><div class="lgu">xiaobingzhan.com</div><div class="lgs">最快 <b>8</b> 小时上线</div>
 <div class="ph">✆0591-28322295</div><div class="sr"><b>热销楼盘 ▾</b>请输入您要找的热销楼盘名称<i></i></div><div class="ln"></div>
 <div class="nv"><span style="left:150px">网站首页</span><span style="left:200px">家装百科</span><span style="left:250px">工装案例</span><span style="left:300px">家装案例</span><span class="on" style="left:350px">设计团队</span><span style="left:400px">材料展示</span><span style="left:450px">三星品高工艺</span><span style="left:500px">三星品高服务</span><span style="left:550px">关于三星品高</span><span style="left:600px">联系我们</span></div>
 <div class="ib"><div class="t">TEAM<small>设计团队</small></div><div class="bc">当前位置：首页 &gt; 设计团队</div></div>
 <div class="sn"><span style="left:150px">一部</span><span style="left:202px">二部</span><span style="left:255px">三部</span><span style="left:308px">四部</span></div>
</div>
<!-- team cards -->
<div class="a" style="left:150px;top:2413px;width:117px;height:223px;background:#f3f3f3"></div>
<div class="a" style="left:277px;top:2413px;width:118px;height:223px;background:#f3f3f3"></div>
<div class="a" style="left:405px;top:2413px;width:117px;height:223px;background:#f3f3f3"></div>
<div class="a" style="left:532px;top:2413px;width:118px;height:223px;background:#f3f3f3"></div>
<div class="a" style="left:150px;top:2648px;width:117px;height:224px;background:#f3f3f3"></div>
<div class="a" style="left:277px;top:2648px;width:118px;height:224px;background:#f3f3f3"></div>
<div class="a" style="left:405px;top:2648px;width:117px;height:224px;background:#f3f3f3"></div>
<div class="a" style="left:532px;top:2648px;width:118px;height:224px;background:#f3f3f3"></div>
<!-- headers -->
<div class="a" style="left:156px;top:2415px;font-size:9px;color:#ccc">DESIGNER SHOW</div><div class="a" style="left:283px;top:2415px;font-size:9px;color:#ccc">DESIGNER SHOW</div><div class="a" style="left:411px;top:2415px;font-size:9px;color:#ccc">DESIGNER SHOW</div><div class="a" style="left:538px;top:2415px;font-size:9px;color:#ccc">DESIGNER SHOW</div>
<div class="a" style="left:156px;top:2651px;font-size:9px;color:#ccc">DESIGNER SHOW</div><div class="a" style="left:283px;top:2651px;font-size:9px;color:#ccc">DESIGNER SHOW</div><div class="a" style="left:411px;top:2651px;font-size:9px;color:#ccc">DESIGNER SHOW</div><div class="a" style="left:538px;top:2651px;font-size:9px;color:#ccc">DESIGNER SHOW</div>

<div class="a" style="left:158px;top:2428px;font-size:12px;color:#e8770e;line-height:14px"><span style="color:#999">🏆</span> 测试</div><div class="a" style="left:215px;top:2430px;font-size:3.5px;color:#666;line-height:5px">主任设计师<br>10年经验</div>
<div class="a" style="left:285px;top:2428px;font-size:12px;color:#e8770e;line-height:14px;width:72px"><span style="color:#999">🏆</span> 中海达<br>&nbsp;&nbsp;&nbsp;&nbsp;到</div><div class="a" style="left:342px;top:2430px;font-size:3.5px;color:#666;line-height:5px">经验石<br>10年经验</div>
<div class="a" style="left:413px;top:2428px;font-size:12px;color:#e8770e;line-height:14px"><span style="color:#999">🏆</span> 小强</div><div class="a" style="left:470px;top:2430px;font-size:3.5px;color:#666;line-height:5px">首席设计师<br>10年经验</div>
<div class="a" style="left:540px;top:2428px;font-size:12px;color:#e8770e;line-height:14px"><span style="color:#999">🏆</span> 许传佛</div><div class="a" style="left:597px;top:2430px;font-size:3.5px;color:#666;line-height:5px">主创设计师<br>6年经验</div>
<div class="a" style="left:158px;top:2664px;font-size:12px;color:#e8770e;line-height:14px"><span style="color:#999">🏆</span> 林凤钰</div><div class="a" style="left:215px;top:2666px;font-size:3.5px;color:#666;line-height:5px">设计总监<br>8年经验</div>
<div class="a" style="left:285px;top:2664px;font-size:12px;color:#e8770e;line-height:14px"><span style="color:#999">🏆</span> 杨进</div><div class="a" style="left:342px;top:2666px;font-size:3.5px;color:#666;line-height:5px">首席设计师<br>9年经验</div>
<div class="a" style="left:413px;top:2664px;font-size:12px;color:#e8770e;line-height:14px"><span style="color:#999">🏆</span> 苏文福</div><div class="a" style="left:470px;top:2666px;font-size:3.5px;color:#666;line-height:5px">首席设计师<br>10年经验</div>
<div class="a" style="left:540px;top:2664px;font-size:12px;color:#e8770e;line-height:14px"><span style="color:#999">🏆</span> 吴祥章</div><div class="a" style="left:597px;top:2666px;font-size:3.5px;color:#666;line-height:5px">首席设计师<br>7年经验</div>
<!-- buttons -->
<div class="a" style="left:247px;top:2429px;width:13px;height:14px;background:#e8770e;color:#fff;font-size:4px;line-height:5px;text-align:center;padding-top:2px">免费<br>预约</div>
<div class="a" style="left:375px;top:2429px;width:13px;height:14px;background:#e8770e;color:#fff;font-size:4px;line-height:5px;text-align:center;padding-top:2px">免费<br>预约</div>
<div class="a" style="left:502px;top:2429px;width:13px;height:14px;background:#e8770e;color:#fff;font-size:4px;line-height:5px;text-align:center;padding-top:2px">免费<br>预约</div>
<div class="a" style="left:630px;top:2429px;width:13px;height:14px;background:#e8770e;color:#fff;font-size:4px;line-height:5px;text-align:center;padding-top:2px">免费<br>预约</div>
<div class="a" style="left:247px;top:2665px;width:13px;height:14px;background:#e8770e;color:#fff;font-size:4px;line-height:5px;text-align:center;padding-top:2px">免费<br>预约</div>
<div class="a" style="left:375px;top:2665px;width:13px;height:14px;background:#e8770e;color:#fff;font-size:4px;line-height:5px;text-align:center;padding-top:2px">免费<br>预约</div>
<div class="a" style="left:502px;top:2665px;width:13px;height:14px;background:#e8770e;color:#fff;font-size:4px;line-height:5px;text-align:center;padding-top:2px">免费<br>预约</div>
<div class="a" style="left:630px;top:2665px;width:13px;height:14px;background:#e8770e;color:#fff;font-size:4px;line-height:5px;text-align:center;padding-top:2px">免费<br>预约</div>
<!-- photos -->
<div class="a bw" style="left:156px;top:2451px;width:105px;height:140px"></div>
<div class="a" style="left:284px;top:2465px;width:104px;height:140px;background:radial-gradient(ellipse 25% 22% at 45% 35%,#f5ddd0,#e6bfae 70%,transparent 72%),radial-gradient(ellipse 45% 40% at 40% 40%,#1e1a18,#1e1a18 80%,transparent 82%),linear-gradient(135deg,#c9c2bc,#e23d64 70%,#f0c9a8)"></div>
<div class="a" style="left:411px;top:2451px;width:105px;height:140px;background:radial-gradient(ellipse 24% 20% at 40% 38%,#f4d8c6,#e0b89e 70%,transparent 72%),linear-gradient(180deg,#7a4a2a 0%,#5a3a2a 40%,#c6e13a 70%,#b8d436)"></div>
<div class="a bwl" style="left:538px;top:2451px;width:106px;height:140px"></div>
<div class="a bwl" style="left:156px;top:2686px;width:105px;height:140px;background:radial-gradient(ellipse 20% 15% at 50% 22%,#ccc,#999 70%,transparent 72%),linear-gradient(90deg,transparent 35%,#111 35%,#eee 50%,#111 65%,transparent 65%),linear-gradient(180deg,#777,#333)"></div>
<div class="a bw" style="left:284px;top:2686px;width:104px;height:140px;background:radial-gradient(ellipse 22% 16% at 48% 25%,#aaa,#777 70%,transparent 72%),linear-gradient(180deg,#4a4a4a,#999 50%,#222)"></div>
<div class="a bw" style="left:411px;top:2686px;width:105px;height:140px"></div>
<div class="a bwl" style="left:538px;top:2686px;width:106px;height:140px"></div>
<!-- thumbs -->
<div class="a int3" style="left:411px;top:2594px;width:50px;height:38px"></div>
<div class="a int" style="left:538px;top:2594px;width:50px;height:38px"></div><div class="a int3" style="left:594px;top:2594px;width:50px;height:38px"></div>
<div class="a int2" style="left:156px;top:2830px;width:50px;height:38px"></div><div class="a" style="left:211px;top:2830px;width:50px;height:38px;background:linear-gradient(180deg,#c8bcb0,#6a5a4e)"></div>
<div class="a int3" style="left:284px;top:2830px;width:50px;height:38px;background:linear-gradient(180deg,#e8e2d8,#5a4c42)"></div><div class="a" style="left:338px;top:2830px;width:50px;height:38px;background:linear-gradient(180deg,#ddd,#2c4466)"></div>
<div class="a int" style="left:538px;top:2830px;width:50px;height:38px"></div><div class="a int" style="left:594px;top:2830px;width:50px;height:38px"></div>
<div class="a" style="left:388px;top:2895px;width:26px;height:11px;border:1px solid #eee;font-size:4.5px;color:#666;text-align:center;line-height:9px">共 8 条</div>

<div class="ft" style="top:2920px">
 <div class="fd"></div>
 <div class="fc" style="left:150px"><b>家装案例</b>家装住宅<br>别墅设计<br>软装设计<br>精装样板间<br>商业空间<br>板间样板房<br>360°全景房</div>
 <div class="fc" style="left:211px"><b>设计团队</b>一部<br>二部<br>三部<br>四部</div>
 <div class="fc" style="left:273px"><b>三星品高工艺</b>施工流程<br>工程体系<br>工艺图解<br>环境保障<br>工艺<br>明星工长</div>
 <div class="fc" style="left:334px"><b>家装百科</b>热点专题<br>三星品高资讯<br>媒体报道<br>家装日记<br>装修攻略</div>
 <div class="fc" style="left:395px"><b>关于三星品高</b>公司简介<br>公司荣誉<br>公司文化<br>公司历程<br>公司荣誉<br>人才招聘<br>联系我们</div>
 <div class="fc" style="left:457px"><b>关注我们</b>● 微信</div>
 <svg class="a" style="left:522px;top:14px" width="22" height="22" viewBox="0 0 18 19"><ellipse cx="5" cy="5" rx="3" ry="5" transform="rotate(-35 5 5)" fill="#8cc63f"/><ellipse cx="13" cy="5" rx="3" ry="5" transform="rotate(35 13 5)" fill="#f26b3a"/><ellipse cx="5" cy="14" rx="3" ry="5" transform="rotate(35 5 14)" fill="#29b6d8"/><ellipse cx="13" cy="14" rx="3" ry="5" transform="rotate(-35 13 14)" fill="#f59a8b"/></svg>
 <div class="a" style="left:544px;top:16px;font-size:12px;color:#fff">小兵建站</div>
 <div class="a" style="left:526px;top:32px;font-size:16px;font-weight:bold;color:#fff;line-height:18px">188 2802 1173</div>
 <div class="a" style="left:526px;top:52px;width:115px;font-size:4px;color:#999;line-height:6px">四川省成都市府城大道西段399号（天府新谷7号楼五楼移动互联网创业部落）</div>
 <div class="a" style="left:526px;top:71px;width:48px;height:17px;background:#d71920;border:1px solid #fff;color:#fff;font-size:4.5px;line-height:15px;padding-left:19px">诚信网站</div>
 <div class="fg"><span style="position:absolute;left:150px;color:#ddd">链接按钮</span><span style="position:absolute;left:340px">友情链接： 小兵建站CMS 成都APP开发 宽高科技</span></div>
 <div class="fb">川ICP888888 宽高科技</div>
</div>
<div class="fl" style="top:2508px"><div class="h">三星品高装饰</div><div class="x">x</div>
<div class="r" style="top:28px">客户姓名：<i></i></div><div class="r" style="top:41px">联系电话：<i></i></div><div class="r" style="top:54px">装修地点：<i></i></div><div class="r" style="top:67px">建筑面积：<i></i></div><div class="r" style="top:80px">装修风格：<i style="width:28px;border-color:#ccc">&nbsp;现代风格 ▾</i></div><div class="bt">申请预约</div></div>
<div class="tk" style="top:2593px"><div><svg width="14" height="12"><rect x="1" y="1" width="12" height="8" fill="none" stroke="#555"/><circle cx="4" cy="5" r=".8" fill="#555"/><circle cx="7" cy="5" r=".8" fill="#555"/><circle cx="10" cy="5" r=".8" fill="#555"/></svg>在线咨询</div><div><svg width="10" height="14"><rect x="1" y="1" width="8" height="12" fill="none" stroke="#555"/><rect x="2.5" y="2.5" width="5" height="3" fill="#555"/></svg>快速报价</div><div><svg width="12" height="14"><path d="M6 1C3 1 2 4 2 7c0 2-1 4 0 5 1 0 2-1 4-1s3 1 4 1c1-1 0-3 0-5 0-3-1-6-4-6z" fill="none" stroke="#555"/></svg>QQ</div><div style="border:none"><svg width="14" height="12"><ellipse cx="5" cy="5" rx="4" ry="3.5" fill="none" stroke="#555"/><ellipse cx="9" cy="8" rx="4" ry="3" fill="#fff" stroke="#555"/></svg>微信</div></div>

<!-- ================= PAGE 4 ================= -->
<div class="hd" style="top:3150px">
 <div class="tb"><span class="l">欢迎访问三星品高装饰</span><span class="r">● 成都市知名商标 ● 群众满意品牌 ● 全国住宅装饰示范工程单位</span></div>
 <svg class="lg" width="18" height="19" viewBox="0 0 18 19"><ellipse cx="5" cy="5" rx="3" ry="5" transform="rotate(-35 5 5)" fill="#8cc63f"/><ellipse cx="13" cy="5" rx="3" ry="5" transform="rotate(35 13 5)" fill="#f26b3a"/><ellipse cx="5" cy="14" rx="3" ry="5" transform="rotate(35 5 14)" fill="#29b6d8"/><ellipse cx="13" cy="14" rx="3" ry="5" transform="rotate(-35 13 14)" fill="#f59a8b"/></svg>
 <div class="lgt">小兵建站</div><div class="lgu">xiaobingzhan.com</div><div class="lgs">最快 <b>8</b> 小时上线</div>
 <div class="ph">✆0591-28322295</div><div class="sr"><b>热销楼盘 ▾</b>请输入您要找的热销楼盘名称<i></i></div><div class="ln"></div>
 <div class="nv"><span style="left:150px">网站首页</span><span class="on" style="left:200px">家装百科</span><span style="left:250px">工装案例</span><span style="left:300px">家装案例</span><span style="left:350px">设计团队</span><span style="left:400px">材料展示</span><span style="left:450px">三星品高工艺</span><span style="left:500px">三星品高服务</span><span style="left:550px">关于三星品高</span><span style="left:600px">联系我们</span></div>
 <div class="ib"><div class="t">ACTIVTY<small>家装百科</small></div><div class="bc">当前位置：首页 &gt; 家装百科 &gt; 热点专题</div></div>
 <div class="sn"><span class="on" style="left:150px">热点专题</span><span style="left:202px">三星品高资讯</span><span style="left:255px">媒体报道</span><span style="left:308px">家装日记</span><span style="left:361px">装修攻略</span></div>
</div>
<div class="a" style="left:158px;top:3317px;font-size:7px;color:#444">有家装饰装修四大保障 <span style="font-size:4px;color:#aaa">DATE:2016-01-26 READ:147</span></div>
<div class="a" style="left:158px;top:3330px;width:379px;height:105px;background:radial-gradient(ellipse 60% 50% at 50% 40%,#f2e0c4,#c8aa86 60%,#8a7a6a)"></div>
<div class="a" style="left:225px;top:3345px;font-size:27px;font-weight:bold;color:#b3261a;line-height:30px">向行业<span style="color:#222">黑幕</span>宣战!</div>
<div class="a" style="left:265px;top:3378px;font-size:5.5px;color:#333;letter-spacing:2px">有家装饰与您签署《四大保障承诺书》</div>
<div class="a" style="left:265px;top:3390px;font-size:10px;color:#c83224;letter-spacing:20px">◎+◎+◎+◎</div>
<div class="a" style="left:547px;top:3333px;width:98px;font-size:4px;color:#666;line-height:9.5px">有家装饰四大保障：1、材料省一赔十（专属《材料保真承诺》）；2、增项全免费（专属《0增项承诺》）；3、延期包赔（专属《工期承诺》）；4、环保质...<br><br>活动时间：2016-01-01至2017-01-01<br>活动地点：福州市西二环路郭宅地产交易中心B 鸿馆红博1-3层</div>
<div class="a" style="left:547px;top:3423px;width:40px;height:11px;background:#e8770e;color:#fff;font-size:4.5px;line-height:11px;text-align:center">▸ 在线咨询</div>
<div class="a" style="left:592px;top:3423px;width:40px;height:11px;background:#3a3a3a;color:#fff;font-size:4.5px;line-height:11px;text-align:center">▸ 查看详情</div>

<div class="a" style="left:158px;top:3449px;font-size:7px;color:#444">1月30日长乐家装大典，有家装饰1元开仓！ <span style="font-size:4px;color:#aaa">DATE:2016-01-26 READ:94</span></div>
<div class="a" style="left:158px;top:3462px;width:379px;height:105px;background:radial-gradient(ellipse 40% 60% at 50% 40%,#c5321a 0%,#8e1d0e 60%,#5a1208 100%);overflow:hidden">
 <div class="a" style="left:0;top:0;width:40px;height:105px;background:repeating-linear-gradient(90deg,#b8521f 0 2px,#5e1a0a 2px 5px)"></div>
 <div class="a" style="left:340px;top:0;width:39px;height:105px;background:radial-gradient(circle,#e03a1c,#9e1e0e)"></div>
 <div class="a" style="left:45px;top:20px;width:40px;height:85px;background:linear-gradient(180deg,#7a1f14 0%,#2a4e8e 45%,#1f3c74 100%);border-radius:20px 20px 0 0"></div>
 <div class="a" style="left:96px;top:16px;font-size:27px;font-weight:bold;color:#ffef1a;line-height:30px;text-shadow:1px 1px 0 #7a2a00">长乐家装大典</div>
 <div class="a" style="left:290px;top:18px;width:36px;height:36px;border-radius:50%;background:#c01622;color:#fff;font-size:8px;font-weight:bold;text-align:center;line-height:10px;padding-top:6px">1月30日</div>
 <div class="a" style="left:115px;top:50px;width:170px;height:8px;border-radius:4px;background:#fbe7a0;color:#b2321b;font-size:5px;line-height:8px;text-align:center;font-weight:bold">福建明星主持人与您面对面·帮您砍价</div>
 <div class="a" style="left:125px;top:64px;width:120px;height:38px;background:#e65d16;color:#fff;font-size:14px;font-weight:bold;padding:14px 0 0 5px">砍价后? 1100</div>
 <div class="a" style="left:250px;top:60px;width:70px;height:45px;background:linear-gradient(90deg,#eee,#fff,#ddd)"></div>
</div>
<div class="a" style="left:547px;top:3465px;width:98px;font-size:4px;color:#666;line-height:9.5px">1月30日，长乐电视台携手有家装饰重磅出席霸大咖，明星主持带您砍价！1元下单免费送！全国装修透有家装饰，全屋开仓盛1折起！来说房交国1折起！...<br><br>活动时间：2016-01-28至2016-01-29<br>活动地点：福州市西二环路郭宅地产交易中心B 鸿馆红博1-3层</div>
<div class="a" style="left:547px;top:3555px;width:40px;height:11px;background:#e8770e;color:#fff;font-size:4.5px;line-height:11px;text-align:center">▸ 在线咨询</div>
<div class="a" style="left:592px;top:3555px;width:40px;height:11px;background:#3a3a3a;color:#fff;font-size:4.5px;line-height:11px;text-align:center">▸ 查看详情</div>
<div class="a" style="left:388px;top:3585px;width:26px;height:11px;border:1px solid #eee;font-size:4.5px;color:#666;text-align:center;line-height:9px">共 2 条</div>

<div class="ft" style="top:3610px">
 <div class="fd"></div>
 <div class="fc" style="left:150px"><b>家装案例</b>家装住宅<br>别墅设计<br>软装设计<br>精装样板间<br>商业空间<br>板间样板房<br>360°全景房</div>
 <div class="fc" style="left:211px"><b>设计团队</b>一部<br>二部<br>三部<br>四部</div>
 <div class="fc" style="left:273px"><b>三星品高工艺</b>施工流程<br>工程体系<br>工艺图解<br>环境保障<br>工艺<br>明星工长</div>
 <div class="fc" style="left:334px"><b>家装百科</b>热点专题<br>三星品高资讯<br>媒体报道<br>家装日记<br>装修攻略</div>
 <div class="fc" style="left:395px"><b>关于三星品高</b>公司简介<br>公司荣誉<br>公司文化<br>公司历程<br>公司荣誉<br>人才招聘<br>联系我们</div>
 <div class="fc" style="left:457px"><b>关注我们</b>● 微信</div>
 <svg class="a" style="left:522px;top:14px" width="22" height="22" viewBox="0 0 18 19"><ellipse cx="5" cy="5" rx="3" ry="5" transform="rotate(-35 5 5)" fill="#8cc63f"/><ellipse cx="13" cy="5" rx="3" ry="5" transform="rotate(35 13 5)" fill="#f26b3a"/><ellipse cx="5" cy="14" rx="3" ry="5" transform="rotate(35 5 14)" fill="#29b6d8"/><ellipse cx="13" cy="14" rx="3" ry="5" transform="rotate(-35 13 14)" fill="#f59a8b"/></svg>
 <div class="a" style="left:544px;top:16px;font-size:12px;color:#fff">小兵建站</div>
 <div class="a" style="left:526px;top:32px;font-size:16px;font-weight:bold;color:#fff;line-height:18px">188 2802 1173</div>
 <div class="a" style="left:526px;top:52px;width:115px;font-size:4px;color:#999;line-height:6px">四川省成都市府城大道西段399号（天府新谷7号楼五楼移动互联网创业部落）</div>
 <div class="a" style="left:526px;top:71px;width:48px;height:17px;background:#d71920;border:1px solid #fff;color:#fff;font-size:4.5px;line-height:15px;padding-left:19px">诚信网站</div>
 <div class="fg"><span style="position:absolute;left:150px;color:#ddd">链接按钮</span><span style="position:absolute;left:340px">友情链接： 小兵建站CMS 成都APP开发 宽高科技</span></div>
 <div class="fb">川ICP888888 宽高科技</div>
</div>
<div class="fl" style="top:3416px"><div class="h">三星品高装饰</div><div class="x">x</div>
<div class="r" style="top:28px">客户姓名：<i></i></div><div class="r" style="top:41px">联系电话：<i></i></div><div class="r" style="top:54px">装修地点：<i></i></div><div class="r" style="top:67px">建筑面积：<i></i></div><div class="r" style="top:80px">装修风格：<i style="width:28px;border-color:#ccc">&nbsp;现代风格 ▾</i></div><div class="bt">申请预约</div></div>
<div class="tk" style="top:3393px"><div><svg width="14" height="12"><rect x="1" y="1" width="12" height="8" fill="none" stroke="#555"/><circle cx="4" cy="5" r=".8" fill="#555"/><circle cx="7" cy="5" r=".8" fill="#555"/><circle cx="10" cy="5" r=".8" fill="#555"/></svg>在线咨询</div><div><svg width="10" height="14"><rect x="1" y="1" width="8" height="12" fill="none" stroke="#555"/><rect x="2.5" y="2.5" width="5" height="3" fill="#555"/></svg>快速报价</div><div><svg width="12" height="14"><path d="M6 1C3 1 2 4 2 7c0 2-1 4 0 5 1 0 2-1 4-1s3 1 4 1c1-1 0-3 0-5 0-3-1-6-4-6z" fill="none" stroke="#555"/></svg>QQ</div><div style="border:none"><svg width="14" height="12"><ellipse cx="5" cy="5" rx="4" ry="3.5" fill="none" stroke="#555"/><ellipse cx="9" cy="8" rx="4" ry="3" fill="#fff" stroke="#555"/></svg>微信</div></div>

<!-- ================= PAGE 5 ================= -->
<div class="hd" style="top:3826px">
 <div class="tb"><span class="l">欢迎访问三星品高装饰</span><span class="r">● 成都市知名商标 ● 群众满意品牌 ● 全国住宅装饰示范工程单位</span></div>
 <svg class="lg" width="18" height="19" viewBox="0 0 18 19"><ellipse cx="5" cy="5" rx="3" ry="5" transform="rotate(-35 5 5)" fill="#8cc63f"/><ellipse cx="13" cy="5" rx="3" ry="5" transform="rotate(35 13 5)" fill="#f26b3a"/><ellipse cx="5" cy="14" rx="3" ry="5" transform="rotate(35 5 14)" fill="#29b6d8"/><ellipse cx="13" cy="14" rx="3" ry="5" transform="rotate(-35 13 14)" fill="#f59a8b"/></svg>
 <div class="lgt">小兵建站</div><div class="lgu">xiaobingzhan.com</div><div class="lgs">最快 <b>8</b> 小时上线</div>
 <div class="ph">✆0591-28322295</div><div class="sr"><b>热销楼盘 ▾</b>请输入您要找的热销楼盘名称<i></i></div><div class="ln"></div>
 <div class="nv"><span style="left:150px">网站首页</span><span style="left:200px">家装百科</span><span class="on" style="left:250px">工装案例</span><span style="left:300px">家装案例</span><span style="left:350px">设计团队</span><span style="left:400px">材料展示</span><span style="left:450px">三星品高工艺</span><span style="left:500px">三星品高服务</span><span style="left:550px">关于三星品高</span><span style="left:600px">联系我们</span></div>
 <div class="ib"><div class="t">BUILDINGS<small>工装案例</small></div><div class="bc">当前位置：首页 &gt; 工装案例 &gt; 热销楼盘</div></div>
 <div class="sn"><span class="on" style="left:150px">热销楼盘</span><span style="left:202px">在建工地</span></div>
</div>
<div class="a" style="left:152px;top:3993px;font-size:5px;color:#555;line-height:8px">热装楼盘 <span style="background:#e8770e;color:#fff;padding:0 2px">全部</span> 鼓楼区 台江区 晋安区 仓山区 马尾区 闽侯区</div>
<div class="a" style="left:150px;top:4005px;width:500px;height:1px;background:#eee"></div>
<div class="a" style="left:150px;top:4162px;width:500px;height:1px;background:#eee"></div>
<div class="a" style="left:150px;top:4316px;width:500px;height:1px;background:#eee"></div>
<div class="a" style="left:150px;top:4470px;width:500px;height:1px;background:#eee"></div>

<div class="a" style="left:150px;top:4017px;width:117px;height:89px;background:linear-gradient(90deg,transparent 20%,#b07040 20%,#c88a50 45%,#7c5637 60%,transparent 60%),linear-gradient(180deg,#7fb1e0,#cfe3f3 75%,#5a7d3a)"></div>
<div class="a bld2" style="left:275px;top:4017px;width:117px;height:89px"></div>
<div class="a bld3" style="left:399px;top:4017px;width:117px;height:89px"></div>
<div class="a bld" style="left:523px;top:4017px;width:117px;height:89px"></div>
<div class="a bld" style="left:150px;top:4171px;width:117px;height:89px"></div>
<div class="a" style="left:275px;top:4171px;width:117px;height:89px;background:linear-gradient(180deg,#2f6fb7,#8fb2d0 35%,#6f8a4a 65%,#c7b79b)"></div>
<div class="a" style="left:399px;top:4171px;width:117px;height:89px;background:linear-gradient(180deg,#c9dcef,#c4564a 30%,#8a6a5a 60%,#223a7a)"></div>
<div class="a" style="left:523px;top:4171px;width:117px;height:89px;background:linear-gradient(180deg,#3b7ed0,#e8eef4 35%,#d9d0c0 65%,#6a8a4a)"></div>
<div class="a" style="left:150px;top:4325px;width:117px;height:88px;background:linear-gradient(180deg,#6a9fd0,#c89a6a 35%,#4a6a3a 65%,#2a3a3a)"></div>
<div class="a bld3" style="left:275px;top:4325px;width:117px;height:88px;background:linear-gradient(180deg,#b8c8d8,#d8dde2 40%,#6b7a6a 70%,#4a5a3a)"></div>

<div class="cap" style="left:150px;top:4111px;font-size:8px">博仕后龙港城 <em style="font-size:5px">【闽侯区】</em></div>
<div class="cap" style="left:275px;top:4111px;font-size:8px">正祥橘郡 <em style="font-size:5px">【闽侯区】</em></div>
<div class="cap" style="left:399px;top:4111px;font-size:8px">省直机关 <em style="font-size:5px">【晋安区】</em></div>
<div class="cap" style="left:523px;top:4111px;font-size:8px">新榕金城湾 <em style="font-size:5px">【仓山区】</em></div>
<div class="cap" style="left:150px;top:4265px;font-size:8px">靖江湖 <em style="font-size:5px">【晋安区】</em></div>
<div class="cap" style="left:275px;top:4265px;font-size:8px">融侨锦江悦府 <em style="font-size:5px">【台江区】</em></div>
<div class="cap" style="left:399px;top:4265px;font-size:8px">金驿公馆10号 <em style="font-size:5px">【马尾区】</em></div>
<div class="cap" style="left:523px;top:4265px;font-size:8px">阳光花园 <em style="font-size:5px">【台江区】</em></div>
<div class="cap" style="left:150px;top:4419px;font-size:8px">海南公园 <em style="font-size:5px">【闽侯区】</em></div>
<div class="cap" style="left:275px;top:4419px;font-size:8px">蓝光大厦 <em style="font-size:5px">【台江区】</em></div>

<div class="a" style="left:150px;top:4128px;width:51px;height:25px;background:#fff;font-size:6px;color:#333;text-align:center;line-height:25px;font-style:italic">博仕后龙港城</div>
<div class="a" style="left:275px;top:4128px;width:51px;height:25px;background:#fff;font-size:9px;color:#222;text-align:center;line-height:25px">橘郡</div>
<div class="a bld3" style="left:399px;top:4128px;width:51px;height:25px"></div>
<div class="a bld" style="left:523px;top:4128px;width:51px;height:25px"></div>
<div class="a bld" style="left:150px;top:4282px;width:51px;height:25px"></div>
<div class="a" style="left:275px;top:4282px;width:51px;height:25px;background:#efe0c6"></div>
<div class="a" style="left:399px;top:4282px;width:51px;height:25px;background:linear-gradient(180deg,#c9dcef,#c4564a 40%,#223a7a)"></div>
<div class="a bld2" style="left:523px;top:4282px;width:51px;height:25px"></div>
<div class="a bld" style="left:150px;top:4436px;width:51px;height:25px;background:linear-gradient(180deg,#6a9fd0,#c89a6a 45%,#2a3a3a)"></div>
<div class="a bld3" style="left:275px;top:4436px;width:51px;height:25px"></div>

<div class="a" style="left:210px;top:4130px;font-size:4px;color:#777;line-height:9px">»签单数 33户<br>»设计案例 122个</div>
<div class="a" style="left:335px;top:4130px;font-size:4px;color:#777;line-height:9px">»签单数 33户<br>»设计案例 22个</div>
<div class="a" style="left:459px;top:4130px;font-size:4px;color:#777;line-height:9px">»签单数 户<br>»设计案例 个</div>
<div class="a" style="left:583px;top:4130px;font-size:4px;color:#777;line-height:9px">»签单数 55户<br>»设计案例 55个</div>
<div class="a" style="left:210px;top:4284px;font-size:4px;color:#777;line-height:9px">»签单数 88户<br>»设计案例 56个</div>
<div class="a" style="left:335px;top:4284px;font-size:4px;color:#777;line-height:9px">»签单数 88户<br>»设计案例 56个</div>
<div class="a" style="left:459px;top:4284px;font-size:4px;color:#777;line-height:9px">»签单数 55户<br>»设计案例 55个</div>
<div class="a" style="left:583px;top:4284px;font-size:4px;color:#777;line-height:9px">»签单数 户<br>»设计案例 个</div>
<div class="a" style="left:210px;top:4438px;font-size:4px;color:#777;line-height:9px">»签单数 33户<br>»设计案例 22个</div>
<div class="a" style="left:335px;top:4438px;font-size:4px;color:#777;line-height:9px">»签单数 33户<br>»设计案例 122个</div>
<div class="a" style="left:386px;top:4474px;width:30px;height:11px;border:1px solid #eee;font-size:4.5px;color:#666;text-align:center;line-height:9px">共 10 条</div>

<div class="ft" style="top:4500px">
 <div class="fd"></div>
 <div class="fc" style="left:150px"><b>家装案例</b>家装住宅<br>别墅设计<br>软装设计<br>精装样板间<br>商业空间<br>板间样板房<br>360°全景房</div>
 <div class="fc" style="left:211px"><b>设计团队</b>一部<br>二部<br>三部<br>四部</div>
 <div class="fc" style="left:273px"><b>三星品高工艺</b>施工流程<br>工程体系<br>工艺图解<br>环境保障<br>工艺<br>明星工长</div>
 <div class="fc" style="left:334px"><b>家装百科</b>热点专题<br>三星品高资讯<br>媒体报道<br>家装日记<br>装修攻略</div>
 <div class="fc" style="left:395px"><b>关于三星品高</b>公司简介<br>公司荣誉<br>公司文化<br>公司历程<br>公司荣誉<br>人才招聘<br>联系我们</div>
 <div class="fc" style="left:457px"><b>关注我们</b>● 微信</div>
 <svg class="a" style="left:522px;top:14px" width="22" height="22" viewBox="0 0 18 19"><ellipse cx="5" cy="5" rx="3" ry="5" transform="rotate(-35 5 5)" fill="#8cc63f"/><ellipse cx="13" cy="5" rx="3" ry="5" transform="rotate(35 13 5)" fill="#f26b3a"/><ellipse cx="5" cy="14" rx="3" ry="5" transform="rotate(35 5 14)" fill="#29b6d8"/><ellipse cx="13" cy="14" rx="3" ry="5" transform="rotate(-35 13 14)" fill="#f59a8b"/></svg>
 <div class="a" style="left:544px;top:16px;font-size:12px;color:#fff">小兵建站</div>
 <div class="a" style="left:526px;top:32px;font-size:16px;font-weight:bold;color:#fff;line-height:18px">188 2802 1173</div>
 <div class="a" style="left:526px;top:52px;width:115px;font-size:4px;color:#999;line-height:6px">四川省成都市府城大道西段399号（天府新谷7号楼五楼移动互联网创业部落）</div>
 <div class="a" style="left:526px;top:71px;width:48px;height:17px;background:#d71920;border:1px solid #fff;color:#fff;font-size:4.5px;line-height:15px;padding-left:19px">诚信网站</div>
 <div class="fg"><span style="position:absolute;left:150px;color:#ddd">链接按钮</span><span style="position:absolute;left:340px">友情链接： 小兵建站CMS 成都APP开发 宽高科技</span></div>
 <div class="fb">川ICP888888 宽高科技</div>
</div>
<div class="fl" style="top:4093px"><div class="h">三星品高装饰</div><div class="x">x</div>
<div class="r" style="top:28px">客户姓名：<i></i></div><div class="r" style="top:41px">联系电话：<i></i></div><div class="r" style="top:54px">装修地点：<i></i></div><div class="r" style="top:67px">建筑面积：<i></i></div><div class="r" style="top:80px">装修风格：<i style="width:28px;border-color:#ccc">&nbsp;现代风格 ▾</i></div><div class="bt">申请预约</div></div>
<div class="tk" style="top:4177px"><div><svg width="14" height="12"><rect x="1" y="1" width="12" height="8" fill="none" stroke="#555"/><circle cx="4" cy="5" r=".8" fill="#555"/><circle cx="7" cy="5" r=".8" fill="#555"/><circle cx="10" cy="5" r=".8" fill="#555"/></svg>在线咨询</div><div><svg width="10" height="14"><rect x="1" y="1" width="8" height="12" fill="none" stroke="#555"/><rect x="2.5" y="2.5" width="5" height="3" fill="#555"/></svg>快速报价</div><div><svg width="12" height="14"><path d="M6 1C3 1 2 4 2 7c0 2-1 4 0 5 1 0 2-1 4-1s3 1 4 1c1-1 0-3 0-5 0-3-1-6-4-6z" fill="none" stroke="#555"/></svg>QQ</div><div style="border:none"><svg width="14" height="12"><ellipse cx="5" cy="5" rx="4" ry="3.5" fill="none" stroke="#555"/><ellipse cx="9" cy="8" rx="4" ry="3" fill="#fff" stroke="#555"/></svg>微信</div></div>

<!-- watermark -->
<div class="a" style="left:628px;top:4692px;font-size:30px;font-weight:bold;font-style:italic;color:#e8401c;line-height:32px;letter-spacing:-1px">ASP<span style="color:#2a6ab8">300</span></div>
<div class="a" style="left:755px;top:4692px;font-size:11px;font-weight:bold;color:#d33;line-height:12px">源码</div>
<div class="a" style="left:753px;top:4708px;font-size:11px;font-weight:bold;font-style:italic;color:#2a6ab8">.com</div>
</body></html>
